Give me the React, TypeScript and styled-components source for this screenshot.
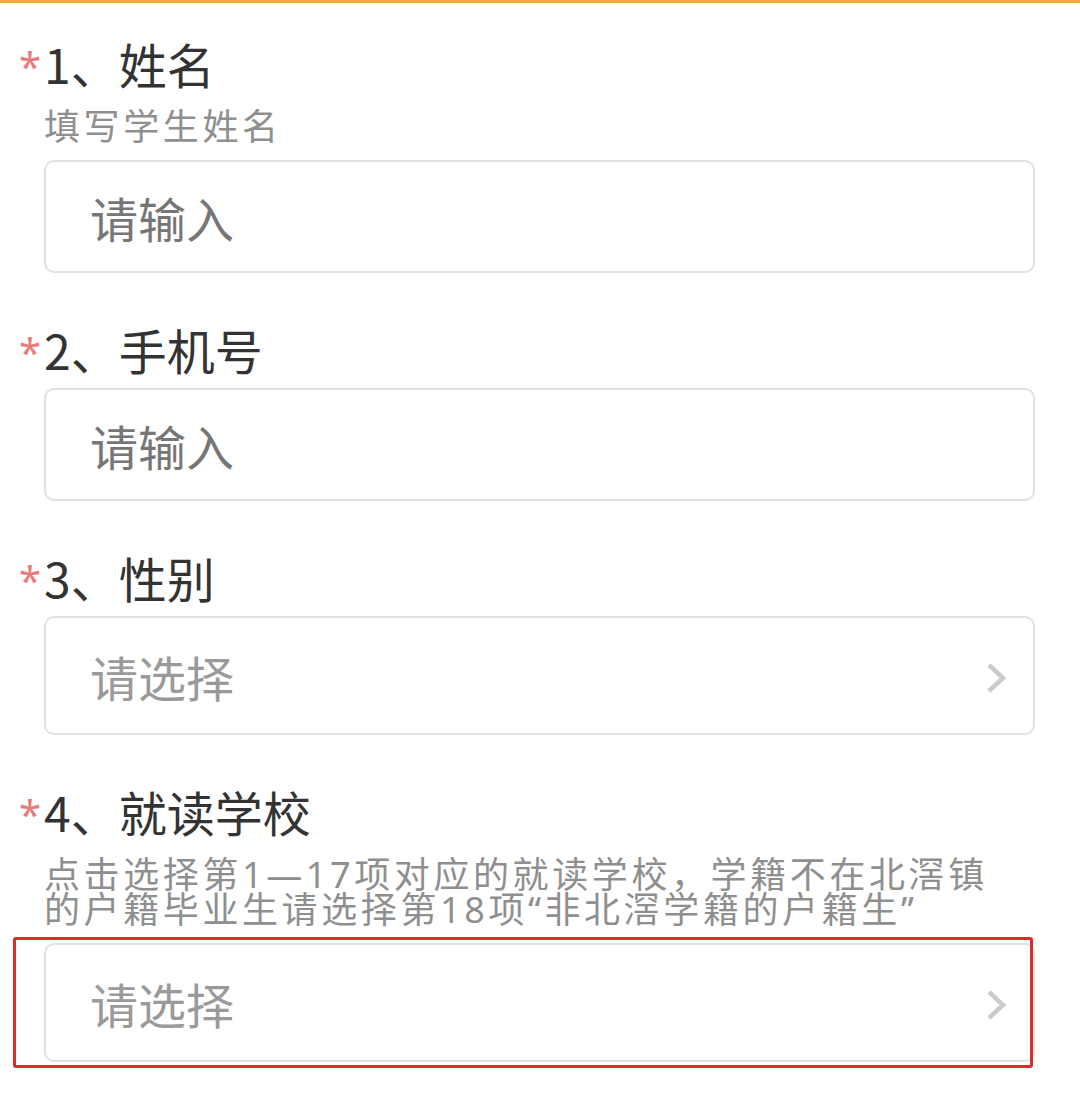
import styled, { createGlobalStyle } from 'styled-components'

const GlobalStyle = createGlobalStyle`
  body {
    margin: 0;
    background: #ffffff;
    font-family: "Noto Sans CJK SC", "Noto Sans", sans-serif;
  }
`

const TopBar = styled.div`
  height: 3px;
  background: #f2a93b;
`

const Form = styled.div`
  padding: 34px 45px 40px 44px;
`

const Field = styled.section`
  & + & {
    margin-top: 50px;
  }
`

const Title = styled.h2`
  display: flex;
  align-items: center;
  box-sizing: border-box;
  height: 60px;
  padding-bottom: 9px;
  margin: 0;
  font-size: 48px;
  font-weight: 400;
  color: #333333;
`

const Star = styled.span`
  align-self: flex-start;
  width: 22px;
  margin-left: -25px;
  margin-right: 3px;
  margin-top: 9px;
  font-family: "Noto Sans", sans-serif;
  font-size: 40px;
  line-height: 40px;
  color: #e97a7a;
`

const Desc = styled.p`
  margin: 12px 0 16px;
  font-family: "Noto Sans", "Noto Sans CJK SC", sans-serif;
  font-size: 36px;
  letter-spacing: 3.6px;
  line-height: 35px;
  color: #8f8f8f;
`

const BoxWrap = styled.div<{ $spaced: boolean }>`
  position: relative;
  margin-top: ${({ $spaced }) => ($spaced ? '0' : '5px')};
`

const Box = styled.div<{ $height: number; $muted: boolean }>`
  display: flex;
  align-items: center;
  justify-content: space-between;
  box-sizing: border-box;
  height: ${({ $height }) => $height}px;
  padding: 0 27px 0 44px;
  border: 2px solid #e2e2e2;
  border-radius: 10px;
  font-size: 48px;
  color: ${({ $muted }) => ($muted ? '#9a9a9a' : '#767676')};
`

const Chevron = styled.svg`
  width: 19px;
  height: 30px;
  margin-top: 5px;
`

const Highlight = styled.div`
  position: absolute;
  top: -6px;
  left: -31px;
  right: 2px;
  bottom: -6px;
  border: 3px solid #d3302c;
  border-radius: 3px;
  pointer-events: none;
`

type FieldProps = {
  title: string
  desc?: React.ReactNode
  select?: boolean
  highlight?: boolean
}

function FormField({ title, desc, select, highlight }: FieldProps) {
  return (
    <Field>
      <Title>
        <Star>*</Star>
        {title}
      </Title>
      {desc && <Desc>{desc}</Desc>}
      <BoxWrap $spaced={!!desc}>
        <Box $height={select ? 119 : 113} $muted={!!select}>
          <span>{select ? '请选择' : '请输入'}</span>
          {select && (
            <Chevron viewBox="0 0 19 30">
              <polyline points="2,2 16,15 2,28" fill="none" stroke="#cbcbcb" strokeWidth="4.5" />
            </Chevron>
          )}
        </Box>
        {highlight && <Highlight />}
      </BoxWrap>
    </Field>
  )
}

export default function App() {
  return (
    <>
      <GlobalStyle />
      <TopBar />
      <Form>
        <FormField title="1、姓名" desc="填写学生姓名" />
        <FormField title="2、手机号" />
        <FormField title="3、性别" select />
        <FormField
          title="4、就读学校"
          desc={
            <>
              点击选择第1—17项对应的就读学校，学籍不在北滘镇
              <br />
              的户籍毕业生请选择第18项“非北滘学籍的户籍生”
            </>
          }
          select
          highlight
        />
      </Form>
    </>
  )
}
